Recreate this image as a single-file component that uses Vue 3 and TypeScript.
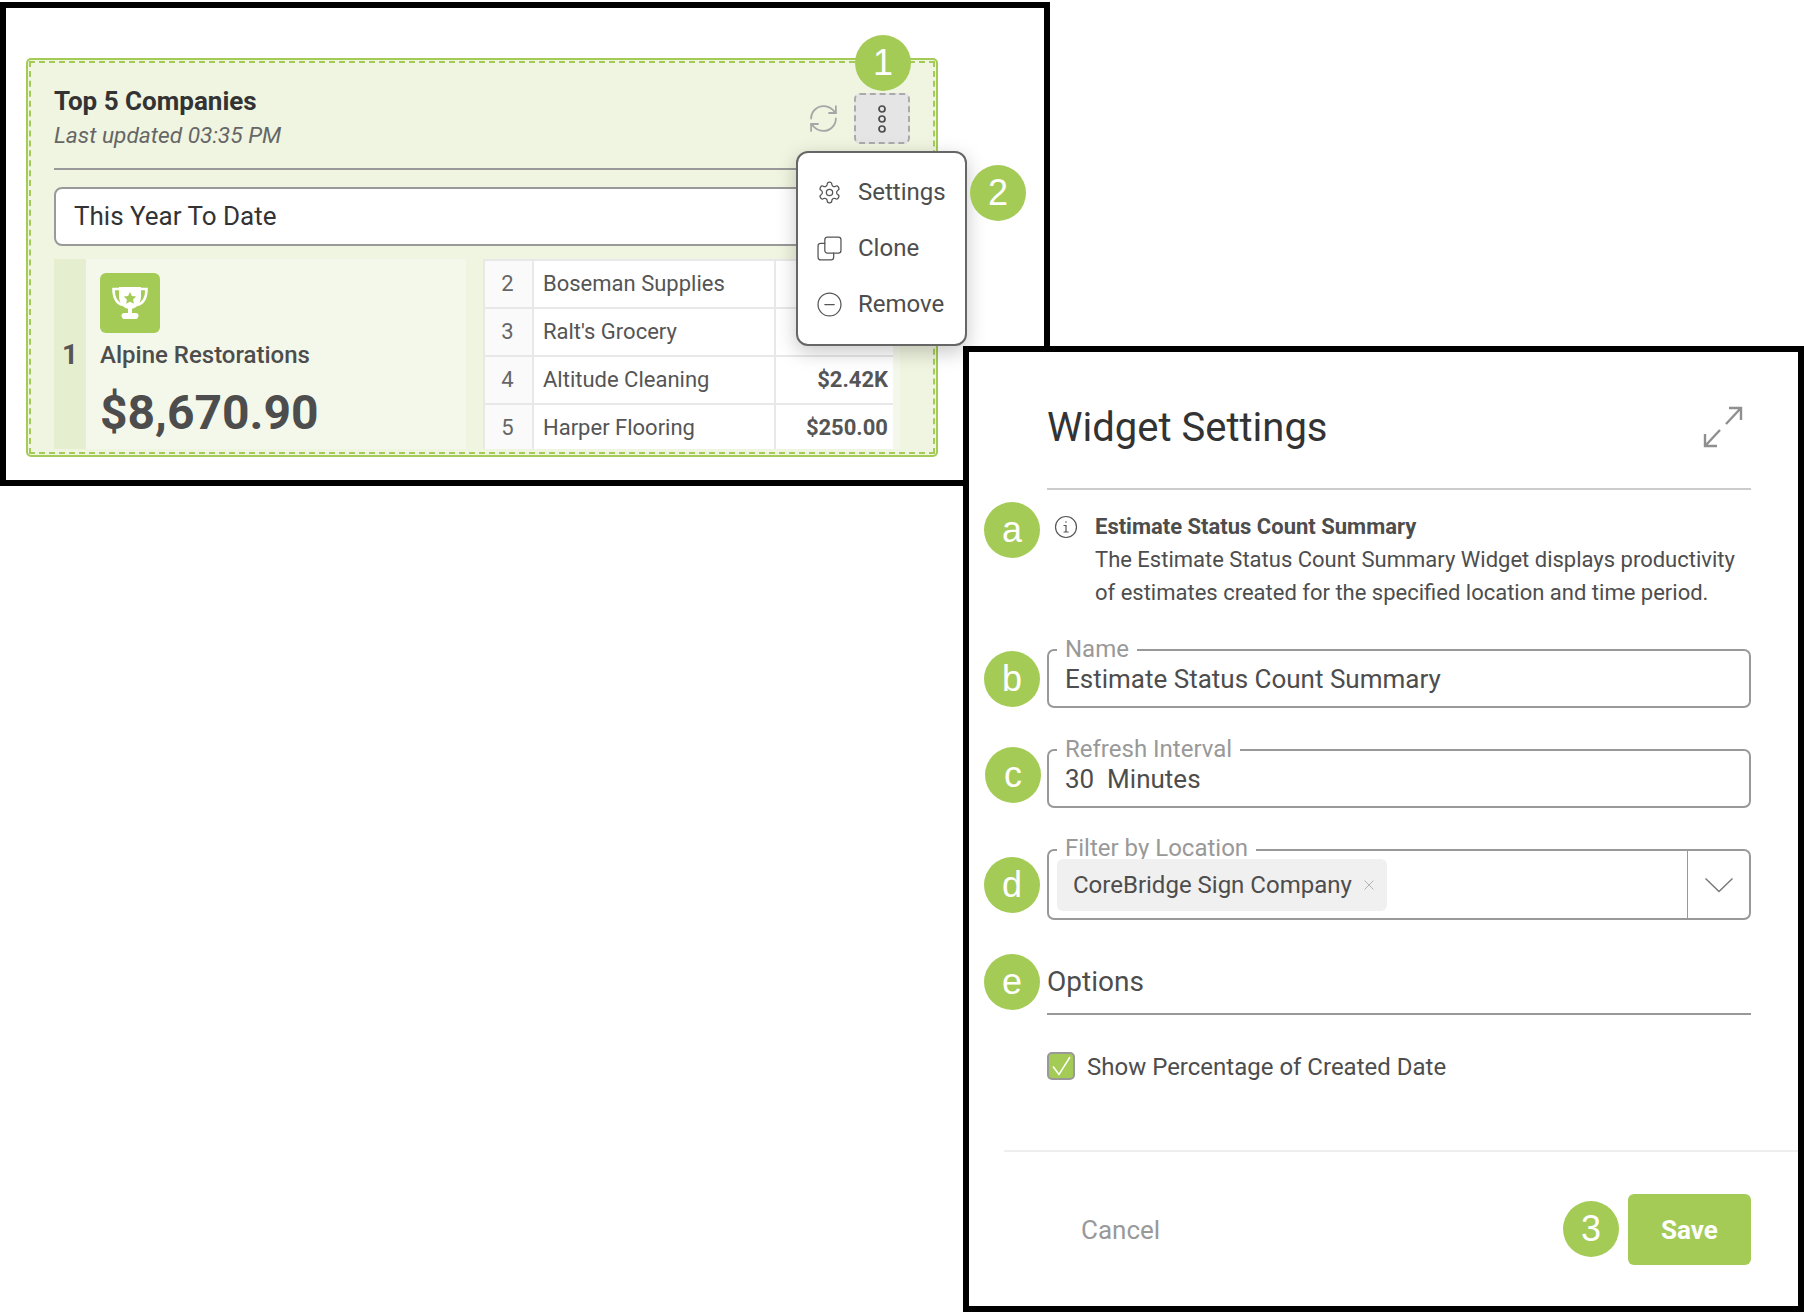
<script setup lang="ts">
interface Row { rank: number; name: string; amount: string }
const rows: Row[] = [
  { rank: 2, name: 'Boseman Supplies', amount: '' },
  { rank: 3, name: "Ralt's Grocery", amount: '' },
  { rank: 4, name: 'Altitude Cleaning', amount: '$2.42K' },
  { rank: 5, name: 'Harper Flooring', amount: '$250.00' },
]
const badges = ['1', '2', 'a', 'b', 'c', 'd', 'e', '3']
const interval = '30  Minutes'
</script>

<template>
  <div class="page">
    <section class="frame-one">
      <div class="card">
        <div class="card-inner">
          <header class="card-head">
            <div>
              <h2 class="card-title">Top 5 Companies</h2>
              <p class="card-sub">Last updated 03:35 PM</p>
            </div>
            <div class="card-actions">
              <svg class="refresh" viewBox="0 0 24 24" fill="none" stroke="#a6a6a6" stroke-width="1.3" stroke-linecap="round" stroke-linejoin="round">
                <path d="M3 12a9 9 0 0 1 9-9 9.75 9.75 0 0 1 6.74 2.74L21 8" />
                <path d="M21 3v5h-5" />
                <path d="M21 12a9 9 0 0 1-9 9 9.75 9.75 0 0 1-6.74-2.74L3 16" />
                <path d="M8 16H3v5" />
              </svg>
              <div class="kebab">
                <svg width="10" height="30" viewBox="0 0 10 30" fill="none" stroke="#4d4d4d" stroke-width="1.700">
                  <circle cx="5" cy="5" r="3" />
                  <circle cx="5" cy="15" r="3" />
                  <circle cx="5" cy="25" r="3" />
                </svg>
              </div>
            </div>
          </header>
          <div class="range">This Year To Date</div>
          <div class="rank-row">
            <div class="first-num">1</div>
            <div class="first-panel">
              <div class="trophy">
                <svg width="38" height="34" viewBox="0 0 38 34">
                  <path d="M9 3H2.5c0 8 2.500 14 9 16M29 3h6.500c0 8-2.500 14-9 16" fill="none" stroke="#fff" stroke-width="2.600" />
                  <path d="M8 1h22v9c0 8-5 13-11 13S8 18 8 10z" fill="#fff" />
                  <path d="M17 22h4v6h-4z" fill="#fff" />
                  <path d="M13 27c3 0 9 0 12 0 1.500 0 2.500 1.200 2.500 2.500S26.500 33 25 33H13c-1.500 0-2.500-2.200-2.500-3.500S11.500 27 13 27z" fill="#fff" />
                  <path d="M19 6l1.900 3.900 4.300.6-3.100 3 .7 4.300-3.800-2-3.800 2 .7-4.300-3.100-3 4.300-.6z" fill="#a5cb57" />
                </svg>
              </div>
              <div class="first-name">Alpine Restorations</div>
              <div class="first-amount">$8,670.90</div>
            </div>
            <div class="table-wrap">
              <div class="table">
                <template v-for="row in rows" :key="row.rank">
                  <div class="cell num">{{ row.rank }}</div>
                  <div class="cell name">{{ row.name }}</div>
                  <div class="cell amount">{{ row.amount }}</div>
                </template>
              </div>
            </div>
          </div>
        </div>
      </div>
      <div class="menu">
        <div class="menu-item">
          <svg class="menu-icon" viewBox="0 0 24 24" fill="none" stroke="#555" stroke-width="1.200" stroke-linecap="round" stroke-linejoin="round">
            <path d="M12.220 2h-.44a2 2 0 0 0-2 2v.18a2 2 0 0 1-1 1.730l-.43.25a2 2 0 0 1-2 0l-.15-.08a2 2 0 0 0-2.730.73l-.22.38a2 2 0 0 0 .73 2.730l.15.1a2 2 0 0 1 1 1.720v.51a2 2 0 0 1-1 1.740l-.15.09a2 2 0 0 0-.73 2.730l.22.38a2 2 0 0 0 2.730.73l.15-.08a2 2 0 0 1 2 0l.43.25a2 2 0 0 1 1 1.730V20a2 2 0 0 0 2 2h.44a2 2 0 0 0 2-2v-.18a2 2 0 0 1 1-1.730l.43-.25a2 2 0 0 1 2 0l.15.08a2 2 0 0 0 2.730-.73l.22-.39a2 2 0 0 0-.73-2.730l-.15-.08a2 2 0 0 1-1-1.740v-.5a2 2 0 0 1 1-1.740l.15-.09a2 2 0 0 0 .73-2.730l-.22-.38a2 2 0 0 0-2.730-.73l-.15.08a2 2 0 0 1-2 0l-.43-.25a2 2 0 0 1-1-1.730V4a2 2 0 0 0-2-2z" />
            <circle cx="12" cy="12" r="3" />
          </svg>
          <span>Settings</span>
        </div>
        <div class="menu-item">
          <svg class="menu-icon" viewBox="0 0 24 24" fill="none" stroke="#555" stroke-width="1.200" stroke-linecap="round" stroke-linejoin="round">
            <rect x="7.500" y="1" width="15.500" height="15.500" rx="2.500" />
            <path d="M7.500 7H3.500A2.500 2.500 0 0 0 1 9.500v11A2.500 2.500 0 0 0 3.500 23h10a2.500 2.500 0 0 0 2.500-2.500v-4" />
          </svg>
          <span>Clone</span>
        </div>
        <div class="menu-item">
          <svg class="menu-icon" viewBox="0 0 24 24" fill="none" stroke="#555" stroke-width="1.200" stroke-linecap="round">
            <circle cx="12" cy="12" r="11" />
            <path d="M7.500 12h9" />
          </svg>
          <span>Remove</span>
        </div>
      </div>
    </section>

    <section class="frame-two">
      <div class="dialog">
        <header class="dialog-head">
          <h1 class="dialog-title">Widget Settings</h1>
          <svg class="expand" width="42" height="42" viewBox="0 0 42 42" fill="none" stroke="#8f8f8f" stroke-width="2.400">
            <path d="M27 2h12v12M38.500 2.500L24 18M3 28v12h12M3.500 39.500L18 24" />
          </svg>
        </header>
        <div class="info">
          <svg class="info-icon" viewBox="0 0 24 24" fill="none" stroke="#555" stroke-width="1.200" stroke-linecap="round">
            <circle cx="12" cy="12" r="10.500" />
            <path d="M10 10.500h2v6.500M10 17h4.200" />
            <circle cx="12" cy="7" r="0.800" fill="#555" stroke="none" />
          </svg>
          <div class="info-text">
            <strong>Estimate Status Count Summary</strong>
            <p>The Estimate Status Count Summary Widget displays productivity of estimates created for the specified location and time period.</p>
          </div>
        </div>
        <div class="field first">
          <span class="field-label">Name</span>
          <span class="field-value">Estimate Status Count Summary</span>
        </div>
        <div class="field">
          <span class="field-label">Refresh Interval</span>
          <span class="field-value pre">{{ interval }}</span>
        </div>
        <div class="field select">
          <span class="field-label">Filter by Location</span>
          <div class="chip">
            <span>CoreBridge Sign Company</span>
            <svg width="12" height="12" viewBox="0 0 12 12" stroke="#b5b5b5" stroke-width="1" fill="none"><path d="M1.500 1.500l9 9M10.500 1.500l-9 9" /></svg>
          </div>
          <div class="select-arrow">
            <svg width="30" height="16" viewBox="0 0 30 16" fill="none" stroke="#777" stroke-width="1.400"><path d="M1.500 1.500L15 14.500 28.500 1.500" /></svg>
          </div>
        </div>
        <h3 class="options">Options</h3>
        <div class="check-row">
          <div class="checkbox">
            <svg width="24" height="24" viewBox="0 0 24 24" fill="none" stroke="#fff" stroke-width="1.500"><path d="M4 12.500l6 8L21 3" /></svg>
          </div>
          <span class="check-label">Show Percentage of Created Date</span>
        </div>
        <footer class="dialog-foot">
          <span class="cancel">Cancel</span>
          <button class="save" type="button">Save</button>
        </footer>
      </div>
    </section>

    <div v-for="b in badges" :key="b" class="badge" :class="'badge-' + b">{{ b }}</div>
  </div>
</template>

<style>
html, body { margin: 0; background: #fff; }
</style>

<style scoped>
* { box-sizing: border-box; }
.page {
  position: relative;
  width: 1804px;
  height: 1312px;
  overflow: hidden;
  background: #fff;
  font-family: Roboto, "Liberation Sans", sans-serif;
  color: #4d4d4d;
}
.frame-one {
  position: absolute;
  left: 0;
  top: 2px;
  width: 1050px;
  height: 484px;
  border: 6px solid #000;
  background: #fff;
  padding: 50px 0 0 20px;
}
.card {
  width: 912px;
  height: 399px;
  border: 2px solid #a5cb57;
  border-radius: 5px;
  padding: 1px;
  background: #f0f5e1;
}
.card-inner {
  height: 100%;
  border: 2px dashed #a5cb57;
  padding: 24px 23px 0 23px;
  overflow: hidden;
}
.card-head {
  display: flex;
  justify-content: space-between;
  align-items: flex-start;
  height: 83px;
  border-bottom: 2px solid #999;
}
.card-title {
  margin: 0;
  font-size: 26px;
  line-height: 28px;
  font-weight: 700;
  color: #333;
}
.card-sub {
  margin: 7px 0 0;
  font-size: 22.700px;
  line-height: 28px;
  font-style: italic;
  color: #666;
}
.card-actions {
  display: flex;
  align-items: center;
  gap: 14px;
  margin-top: 6px;
}
.refresh { width: 33px; height: 33px; }
.kebab {
  width: 56px;
  height: 51px;
  display: flex;
  align-items: center;
  justify-content: center;
  background: #e5e5e5;
  border: 2px dashed #aaa;
  border-radius: 6px;
}
.range {
  margin-top: 17px;
  height: 59px;
  display: flex;
  align-items: center;
  padding: 0 0 2px 18px;
  background: #fff;
  border: 2px solid #999;
  border-radius: 8px;
  font-size: 26px;
  color: #333;
}
.rank-row {
  display: flex;
  margin-top: 13px;
  height: 190px;
  width: 846px;
}
.first-num {
  width: 32px;
  display: flex;
  align-items: center;
  justify-content: center;
  background: #e5efd0;
  font-size: 28px;
  font-weight: 700;
  color: #555;
}
.first-panel {
  width: 380px;
  padding: 14px 0 0 14px;
  background: #f4f8ea;
}
.trophy {
  width: 60px;
  height: 60px;
  display: flex;
  align-items: center;
  justify-content: center;
  background: #a5cb57;
  border-radius: 6px;
}
.first-name {
  margin-top: 7px;
  font-size: 24px;
  line-height: 30px;
  font-weight: 500;
}
.first-amount {
  margin-top: 14px;
  font-size: 48px;
  line-height: 58px;
  font-weight: 700;
}
.table-wrap {
  margin-left: 17px;
  width: 417px;
  padding-right: 7px;
  background: #f4f8ea;
}
.table {
  display: grid;
  grid-template-columns: 47px 240px 117px;
  grid-auto-rows: 46px;
  gap: 2px;
  height: 100%;
  overflow: hidden;
  padding: 2px 2px 0;
  background: #e8e8e8;
}
.cell {
  display: flex;
  align-items: center;
  padding-bottom: 2px;
  background: #fff;
  font-size: 22px;
  color: #555;
}
.num {
  justify-content: center;
  padding-right: 2px;
  background: #fafafa;
  color: #666;
}
.name { padding-left: 9px; }
.amount {
  justify-content: flex-end;
  padding-right: 5px;
  font-weight: 700;
}
.menu {
  position: absolute;
  left: 790px;
  top: 143px;
  width: 171px;
  height: 195px;
  padding: 11px 0 0 19px;
  background: #fff;
  border: 2px solid #666;
  border-radius: 12px;
  box-shadow: 0 6px 20px rgba(0, 0, 0, 0.22);
  z-index: 2;
}
.menu-item {
  display: flex;
  align-items: center;
  gap: 16px;
  height: 56px;
  font-size: 24px;
  color: #4d4d4d;
}
.menu-icon { width: 25px; height: 25px; flex: none; }
.frame-two {
  position: absolute;
  left: 963px;
  top: 346px;
  width: 841px;
  height: 966px;
  border: 6px solid #000;
  background: #fff;
  z-index: 3;
}
.dialog { padding: 0 47px 0 78px; }
.dialog-head {
  display: flex;
  justify-content: space-between;
  align-items: center;
  height: 138px;
  padding: 14px 7px 0 0;
  border-bottom: 2px solid #ccc;
}
.dialog-title {
  margin: 1px 0 0;
  font-size: 40px;
  line-height: 44px;
  font-weight: 400;
  color: #333;
}
.info {
  display: flex;
  margin-top: 20px;
}
.info-icon { width: 24px; height: 24px; flex: none; margin: 5px 0 0 7px; }
.info-text {
  margin-left: 17px;
  font-size: 22px;
  line-height: 33px;
  color: #4d4d4d;
}
.info-text strong { display: block; font-weight: 700; }
.info-text p { margin: 0; }
.field {
  position: relative;
  display: flex;
  align-items: center;
  height: 59px;
  margin-top: 41px;
  padding: 0 16px;
  border: 2px solid #999;
  border-radius: 7px;
}
.field.first { margin-top: 40px; }
.field-label {
  position: absolute;
  left: 8px;
  top: -15px;
  padding: 0 8px;
  background: #fff;
  font-size: 24px;
  line-height: 26px;
  color: #999;
}
.field-value {
  padding-top: 1px;
  font-size: 26px;
  color: #4d4d4d;
}
.pre { white-space: pre; }
.select { height: 71px; padding: 0 0 0 8px; }
.select .field-label { top: -16px; }
.chip {
  display: flex;
  align-items: center;
  gap: 11px;
  height: 52px;
  width: 330px;
  padding-left: 16px;
  background: #f0f0f0;
  border-radius: 6px;
  font-size: 24px;
  color: #4d4d4d;
  position: relative;
  z-index: 1;
}
.select-arrow {
  margin-left: auto;
  width: 62px;
  height: 100%;
  display: flex;
  align-items: center;
  justify-content: center;
  border-left: 1px solid #999;
}
.options {
  margin: 44px 0 0;
  height: 51px;
  font-size: 28px;
  line-height: 36px;
  font-weight: 400;
  color: #4d4d4d;
  border-bottom: 2px solid #999;
}
.check-row {
  display: flex;
  align-items: center;
  gap: 12px;
  margin-top: 36px;
  font-size: 24px;
  color: #4d4d4d;
}
.check-label { padding-top: 2px; }
.checkbox {
  width: 28px;
  height: 28px;
  display: flex;
  align-items: center;
  justify-content: center;
  background: #a5cb57;
  border: 2px solid #999;
  border-radius: 5px;
}
.dialog-foot {
  display: flex;
  justify-content: space-between;
  align-items: center;
  margin: 69px -47px 0 -43px;
  padding: 42px 47px 0 77px;
  border-top: 2px solid #eee;
}
.cancel { font-size: 26px; color: #999; }
.save {
  width: 123px;
  height: 71px;
  border: 0;
  border-radius: 6px;
  background: #a5cb57;
  color: #fff;
  font: 700 26px Roboto, "Liberation Sans", sans-serif;
}
.badge {
  position: absolute;
  width: 56px;
  height: 56px;
  display: flex;
  align-items: center;
  justify-content: center;
  border-radius: 50%;
  background: #a5cb57;
  color: #fff;
  font-family: "Liberation Sans", Arial, sans-serif;
  font-size: 36px;
  z-index: 4;
}
.badge-1 { left: 855px; top: 35px; }
.badge-2 { left: 970px; top: 165px; }
.badge-a { left: 984px; top: 502px; }
.badge-b { left: 984px; top: 651px; }
.badge-c { left: 985px; top: 747px; }
.badge-d { left: 984px; top: 857px; }
.badge-e { left: 984px; top: 954px; }
.badge-3 { left: 1563px; top: 1201px; }
</style>
